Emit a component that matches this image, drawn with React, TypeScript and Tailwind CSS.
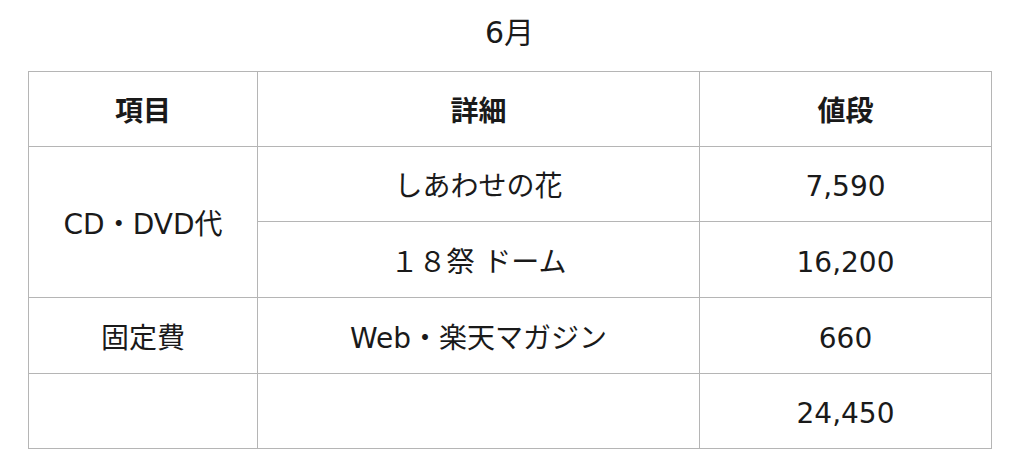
export default function App() {
  const font = { fontFamily: '"DejaVu Sans", "Noto Sans CJK JP", sans-serif' }
  const cell = 'border border-[#b5b5b5] text-center align-middle p-0 pt-[6px]'

  return (
    <div className="w-[1024px] h-[463px] bg-white text-[#1a1a1a]" style={font}>
      <div className="h-[71px] pl-[28px] w-[991px] flex items-center justify-center">
        <span className="text-[30px] leading-none -mt-[6px]">6月</span>
      </div>
      <table className="ml-[28px] border-collapse table-fixed w-[963px] text-[28px] leading-none">
        <colgroup>
          <col className="w-[229px]" />
          <col className="w-[442px]" />
          <col className="w-[292px]" />
        </colgroup>
        <tbody>
          <tr className="h-[75px]">
            <th className={`${cell} font-bold`}>項目</th>
            <th className={`${cell} font-bold`}>詳細</th>
            <th className={`${cell} font-bold`}>値段</th>
          </tr>
          <tr className="h-[75px]">
            <td className={cell} rowSpan={2}>CD・DVD代</td>
            <td className={cell}>しあわせの花</td>
            <td className={cell}>7,590</td>
          </tr>
          <tr className="h-[76px]">
            <td className={cell}>１８祭 ドーム</td>
            <td className={cell}>16,200</td>
          </tr>
          <tr className="h-[76px]">
            <td className={cell}>固定費</td>
            <td className={cell}>Web・楽天マガジン</td>
            <td className={cell}>660</td>
          </tr>
          <tr className="h-[75px]">
            <td className={cell}></td>
            <td className={cell}></td>
            <td className={cell}>24,450</td>
          </tr>
        </tbody>
      </table>
    </div>
  )
}
